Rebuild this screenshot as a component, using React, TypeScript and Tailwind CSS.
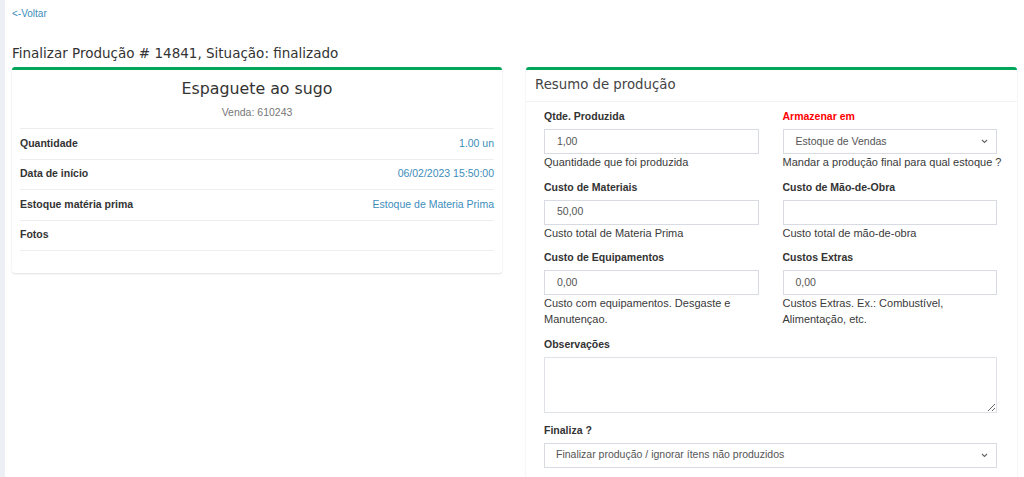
import React from "react";

const dv = { fontFamily: '"DejaVu Sans", Verdana, sans-serif' };

function Chevron() {
  return (
    <svg width="7" height="5" viewBox="0 0 7 5" className="shrink-0">
      <path d="M1 1 L3.5 3.5 L6 1" fill="none" stroke="#666" strokeWidth="1.1" />
    </svg>
  );
}

function Field({
  label,
  value,
  help,
  red,
  select,
}: {
  label: string;
  value?: string;
  help: React.ReactNode;
  red?: boolean;
  select?: boolean;
}) {
  return (
    <div className="mb-[8.5px]">
      <div className={`text-[10.5px] leading-[17px] font-bold ${red ? "text-[#ff0000]" : "text-[#333]"}`}>{label}</div>
      <div className="mt-[4px] flex h-[25px] items-center justify-between border border-[#d8dce2] pl-[12px] pr-[8px] text-[10.5px] text-[#555]">
        <span>{value}</span>
        {select && <Chevron />}
      </div>
      <div className="whitespace-nowrap text-[11px] leading-[16px] text-[#3a3a3a]">{help}</div>
    </div>
  );
}

export default function App() {
  const rows: [string, string][] = [
    ["Quantidade", "1.00 un"],
    ["Data de início", "06/02/2023 15:50:00"],
    ["Estoque matéria prima", "Estoque de Materia Prima"],
    ["Fotos", ""],
  ];
  return (
    <div
      className="flex h-[477px] w-full overflow-hidden bg-white"
      style={{ fontFamily: '"Liberation Sans", Arial, sans-serif' }}
    >
      <div className="w-[5px] shrink-0 bg-[#ecf0f5]" />
      <div className="flex-1 pl-[7px]">
        <div className="pt-[5px] text-[10px] leading-[17px] text-[#3c8dbc]">&lt;-Voltar</div>
        <h1 className="mt-[21px] text-[13.5px] leading-[20px] text-[#333]" style={dv}>
          Finalizar Produção # 14841, Situação: finalizado
        </h1>
        <div className="mt-[4px] flex items-start gap-[24px]">
          {/* Left card */}
          <div className="w-[490px] rounded-[3px] border-t-[3px] border-[#00a65a] bg-white px-[8px] pb-[22px] shadow-[0_1px_2px_rgba(0,0,0,0.13)]">
            <div className="pt-[8px] text-center text-[15.8px] leading-[22px] text-[#333]" style={dv}>
              Espaguete ao sugo
            </div>
            <div className="mt-[4px] text-center text-[10.5px] leading-[16px] text-[#777]">Venda: 610243</div>
            <div className="mt-[8px] border-t border-[#eeeeee]">
              {rows.map(([k, v]) => (
                <div
                  key={k}
                  className="flex h-[30.5px] items-center justify-between border-b border-[#eeeeee] text-[10.5px]"
                >
                  <span className="font-bold text-[#333]">{k}</span>
                  <span className="text-[#3c8dbc]">{v}</span>
                </div>
              ))}
            </div>
          </div>
          {/* Right card */}
          <div className="w-[491px] rounded-[3px] border-t-[3px] border-[#00a65a] bg-white shadow-[0_1px_2px_rgba(0,0,0,0.13)]">
            <div className="flex h-[32px] items-center border-b border-[#f2f2f2] pl-[9px] pb-[1px]">
              <span className="text-[13.3px] text-[#444]" style={dv}>
                Resumo de produção
              </span>
            </div>
            <div className="pl-[18px] pr-[20px] pt-[6px]">
              <div className="grid grid-cols-2 gap-x-[24px]">
                <Field label="Qtde. Produzida" value="1,00" help="Quantidade que foi produzida" />
                <Field
                  label="Armazenar em"
                  red
                  select
                  value="Estoque de Vendas"
                  help="Mandar a produção final para qual estoque ?"
                />
                <Field label="Custo de Materiais" value="50,00" help="Custo total de Materia Prima" />
                <Field label="Custo de Mão-de-Obra" value="" help="Custo total de mão-de-obra" />
                <Field
                  label="Custo de Equipamentos"
                  value="0,00"
                  help={
                    <>
                      Custo com equipamentos. Desgaste e
                      <br />
                      Manutençao.
                    </>
                  }
                />
                <Field
                  label="Custos Extras"
                  value="0,00"
                  help={
                    <>
                      Custos Extras. Ex.: Combustível,
                      <br />
                      Alimentação, etc.
                    </>
                  }
                />
              </div>
              <div className="mb-[9px]">
                <div className="text-[10.5px] leading-[17px] font-bold text-[#333]">Observações</div>
                <textarea className="mt-[4px] block h-[56px] w-full border border-[#dfe2e7] outline-none" />
              </div>
              <div>
                <div className="text-[10.5px] leading-[17px] font-bold text-[#333]">Finaliza ?</div>
                <div className="mt-[4px] flex h-[25px] items-center justify-between border border-[#d8dce2] pl-[11px] pr-[8px] text-[10.5px] text-[#555]">
                  <span>Finalizar produção / ignorar ítens não produzidos</span>
                  <Chevron />
                </div>
              </div>
              <div className="h-[40px]" />
            </div>
          </div>
        </div>
      </div>
    </div>
  );
}
